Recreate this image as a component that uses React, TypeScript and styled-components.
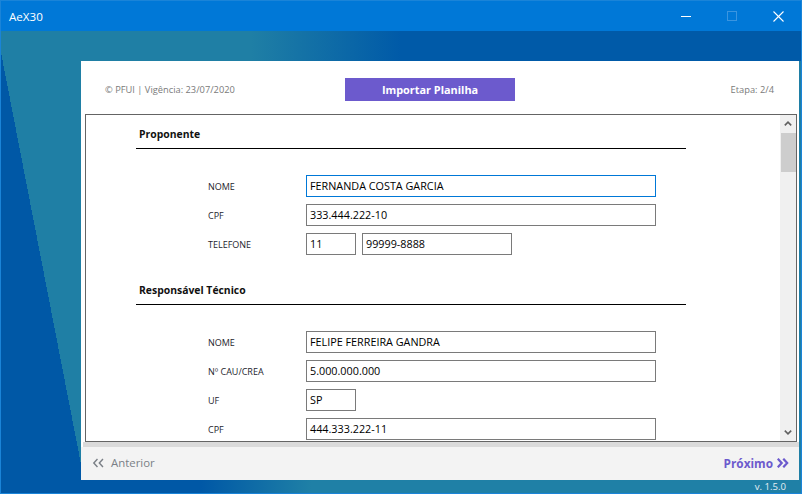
import React from "react";
import styled, { createGlobalStyle } from "styled-components";

const GlobalStyle = createGlobalStyle`
  html, body { margin: 0; padding: 0; background: #fff; }
  body { font-family: "Open Sans", "Noto Sans", sans-serif; }
  * { box-sizing: border-box; }
`;

const Window = styled.div`
  width: 802px;
  height: 494px;
  border: 1px solid #1a84d8;
  display: flex;
  flex-direction: column;
  overflow: hidden;
`;

const TitleBar = styled.div`
  height: 30px;
  flex: none;
  background: #0078d7;
  display: flex;
  align-items: center;
  color: #fff;
`;

const Title = styled.div`
  flex: 1;
  padding-left: 8px;
  font-size: 11.6px;
`;

const WinButton = styled.div<{ $disabled?: boolean }>`
  width: 46px;
  height: 30px;
  display: flex;
  align-items: center;
  justify-content: center;
  color: ${(p) => (p.$disabled ? "#3a95e0" : "#fff")};
`;

const Desktop = styled.div`
  flex: 1;
  display: flex;
  flex-direction: column;
  padding: 30px 2px 0 80px;
  background:
    linear-gradient(79deg, #0058a6 84px, transparent 84px),
    linear-gradient(to right, #1f7fa5 250px, #005aa8 400px) top / 100% 30px no-repeat,
    linear-gradient(to right, #0058a6 200px, #1f80a6 310px) bottom / 100% 14px no-repeat,
    #1f7fa5;
`;

const Panel = styled.div`
  height: 419px;
  flex: none;
  background: #fff;
  display: flex;
  flex-direction: column;
`;

const Header = styled.div`
  height: 53px;
  flex: none;
  display: grid;
  grid-template-columns: 240px 170px 1fr;
  align-items: start;
  padding: 17px 25px 0 24px;
`;

const MetaText = styled.div<{ $right?: boolean }>`
  font-size: 9.3px;
  line-height: 23px;
  color: #7a7a7a;
  text-align: ${(p) => (p.$right ? "right" : "left")};
`;

const ImportButton = styled.button`
  height: 23px;
  border: none;
  padding: 0;
  background: #6c5acd;
  color: #fff;
  font-family: inherit;
  font-weight: 700;
  font-size: 10.9px;
`;

const ScrollBox = styled.div`
  height: 328px;
  flex: none;
  margin: 0 2px 0 4px;
  border: 1px solid #646464;
  display: flex;
  overflow: hidden;
`;

const Content = styled.div`
  flex: 1;
  overflow: hidden;
  padding: 12px 0 0 50px;
  display: flex;
  flex-direction: column;
  gap: 28px;
`;

const Section = styled.section`
  width: 550px;
  display: flex;
  flex-direction: column;
`;

const Heading = styled.div`
  font-size: 10.4px;
  line-height: 15px;
  font-weight: 700;
  color: #111;
  padding: 0 0 6px 3px;
  border-bottom: 1px solid #000;
`;

const FieldList = styled.div`
  margin-top: 26px;
  padding-left: 72px;
  display: flex;
  flex-direction: column;
  gap: 7px;
`;

const FieldRow = styled.div`
  display: flex;
  align-items: center;
  height: 22px;
`;

const Label = styled.div`
  width: 98px;
  flex: none;
  font-size: 9px;
  color: #1e1e2e;
`;

const Inputs = styled.div`
  display: flex;
  gap: 6px;
`;

const TextBox = styled.div<{ $w: number; $focus?: boolean }>`
  width: ${(p) => p.$w}px;
  height: 22px;
  border: 1px solid ${(p) => (p.$focus ? "#0078d7" : "#7a7a7a")};
  padding: 0 3px;
  font-size: 10.8px;
  line-height: 20px;
  color: #000;
  white-space: nowrap;
  overflow: hidden;
`;

const ScrollTrack = styled.div`
  width: 16px;
  flex: none;
  background: #f0f0f0;
  display: flex;
  flex-direction: column;
`;

const ScrollArrow = styled.div`
  height: 17px;
  flex: none;
  display: flex;
  align-items: center;
  justify-content: center;
  color: #606060;
`;

const Thumb = styled.div<{ $h: number }>`
  height: ${(p) => p.$h}px;
  margin: 1px 0 0 1px;
  background: #cdcdcd;
`;

const Spacer = styled.div`
  flex: 1;
`;

const Strip = styled.div`
  height: 5px;
  flex: none;
  margin-left: 2px;
  background: #dadada;
`;

const Footer = styled.div`
  height: 33px;
  flex: none;
  background: #f3f3f3;
  display: flex;
  align-items: center;
  justify-content: space-between;
  padding: 0 10px 2px 11px;
`;

const NavLink = styled.div<{ $primary?: boolean }>`
  display: flex;
  align-items: center;
  gap: ${(p) => (p.$primary ? "4px" : "7px")};
  font-size: ${(p) => (p.$primary ? "11.8px" : "11.4px")};
  font-weight: ${(p) => (p.$primary ? 700 : 400)};
  color: ${(p) => (p.$primary ? "#6c5acd" : "#7a7f86")};
`;

const Version = styled.div`
  height: 13px;
  font-size: 9.6px;
  line-height: 13px;
  color: #e4eef4;
  text-align: right;
  padding-right: 13px;
`;

const Chevrons = ({ dir, bold }: { dir: "left" | "right"; bold?: boolean }) => (
  <svg width="12" height="10" viewBox="0 0 12 10" fill="none" stroke="currentColor"
    strokeWidth={bold ? 2.2 : 1.4} strokeLinecap="square">
    {dir === "left" ? (
      <>
        <polyline points="5,1.5 1.8,5 5,8.5" />
        <polyline points="10.5,1.5 7.3,5 10.5,8.5" />
      </>
    ) : (
      <>
        <polyline points="1.5,1.5 4.7,5 1.5,8.5" />
        <polyline points="7,1.5 10.2,5 7,8.5" />
      </>
    )}
  </svg>
);

const SmallChevron = ({ up }: { up?: boolean }) => (
  <svg width="8" height="5" viewBox="0 0 8 5" fill="none" stroke="currentColor" strokeWidth="1.6">
    <polyline points={up ? "0.8,4.4 4,1.2 7.2,4.4" : "0.8,0.6 4,3.8 7.2,0.6"} />
  </svg>
);

type Field = { label: string; values: { text: string; w: number; focus?: boolean }[] };

const sections: { title: string; fields: Field[] }[] = [
  {
    title: "Proponente",
    fields: [
      { label: "NOME", values: [{ text: "FERNANDA COSTA GARCIA", w: 350, focus: true }] },
      { label: "CPF", values: [{ text: "333.444.222-10", w: 350 }] },
      { label: "TELEFONE", values: [{ text: "11", w: 50 }, { text: "99999-8888", w: 150 }] },
    ],
  },
  {
    title: "Responsável Técnico",
    fields: [
      { label: "NOME", values: [{ text: "FELIPE FERREIRA GANDRA", w: 350 }] },
      { label: "Nº CAU/CREA", values: [{ text: "5.000.000.000", w: 350 }] },
      { label: "UF", values: [{ text: "SP", w: 50 }] },
      { label: "CPF", values: [{ text: "444.333.222-11", w: 350 }] },
    ],
  },
];

export default function App() {
  return (
    <>
      <GlobalStyle />
      <Window>
        <TitleBar>
          <Title>AeX30</Title>
          <WinButton>
            <svg width="10" height="10" viewBox="0 0 10 10" stroke="currentColor" strokeWidth="1">
              <line x1="0" y1="5.5" x2="10" y2="5.5" />
            </svg>
          </WinButton>
          <WinButton $disabled>
            <svg width="10" height="10" viewBox="0 0 10 10" fill="none" stroke="currentColor" strokeWidth="1">
              <rect x="0.5" y="0.5" width="9" height="9" />
            </svg>
          </WinButton>
          <WinButton>
            <svg width="11" height="11" viewBox="0 0 11 11" stroke="currentColor" strokeWidth="1.1">
              <line x1="0.5" y1="0.5" x2="10.5" y2="10.5" />
              <line x1="10.5" y1="0.5" x2="0.5" y2="10.5" />
            </svg>
          </WinButton>
        </TitleBar>
        <Desktop>
          <Panel>
            <Header>
              <MetaText>© PFUI | Vigência: 23/07/2020</MetaText>
              <ImportButton>Importar Planilha</ImportButton>
              <MetaText $right>Etapa: 2/4</MetaText>
            </Header>
            <ScrollBox>
              <Content>
                {sections.map((s) => (
                  <Section key={s.title}>
                    <Heading>{s.title}</Heading>
                    <FieldList>
                      {s.fields.map((f) => (
                        <FieldRow key={f.label}>
                          <Label>{f.label}</Label>
                          <Inputs>
                            {f.values.map((v, i) => (
                              <TextBox key={i} $w={v.w} $focus={v.focus}>{v.text}</TextBox>
                            ))}
                          </Inputs>
                        </FieldRow>
                      ))}
                    </FieldList>
                  </Section>
                ))}
              </Content>
              <ScrollTrack>
                <ScrollArrow><SmallChevron up /></ScrollArrow>
                <Thumb $h={39} />
                <Spacer />
                <ScrollArrow><SmallChevron /></ScrollArrow>
              </ScrollTrack>
            </ScrollBox>
            <Strip />
            <Footer>
              <NavLink>
                <Chevrons dir="left" />
                Anterior
              </NavLink>
              <NavLink $primary>
                Próximo
                <Chevrons dir="right" bold />
              </NavLink>
            </Footer>
          </Panel>
          <Version>v. 1.5.0</Version>
        </Desktop>
      </Window>
    </>
  );
}
